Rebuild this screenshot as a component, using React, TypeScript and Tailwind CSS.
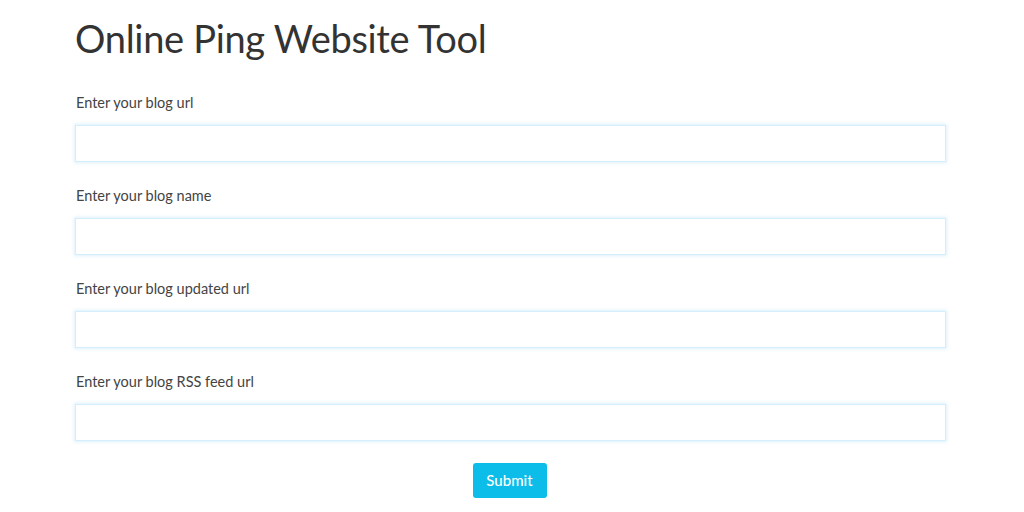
import React from 'react';

const fields = [
  'Enter your blog url',
  'Enter your blog name',
  'Enter your blog updated url',
  'Enter your blog RSS feed url',
];

export default function App() {
  return (
    <div className="min-h-[512px] w-[1024px] bg-white font-['Lato','Noto_Sans',sans-serif] text-[#333]">
      <div className="flex flex-col pl-[75px] pr-[78px] pt-[16px]">
        <h1 className="text-[38px] leading-[44px] font-normal text-[#333] tracking-[-0.3px]">
          Online Ping Website Tool
        </h1>
        <div className="mt-[33px] flex flex-col gap-[24px]">
          {fields.map((f) => (
            <div key={f} className="flex flex-col">
              <label className="text-[14.5px] leading-[20px] text-[#444] pl-px">{f}</label>
              <input
                type="text"
                className="mt-[12px] h-[37px] w-full border border-[#d5eefb] bg-white px-3 outline-none shadow-[0_0_3px_1px_rgba(190,230,250,0.5)]"
              />
            </div>
          ))}
        </div>
        <div className="mt-[22px] flex justify-center pr-[2px]">
          <button className="h-[35px] w-[74px] rounded-[3px] bg-[#0bbde8] text-[15px] font-medium text-white">
            Submit
          </button>
        </div>
      </div>
    </div>
  );
}
